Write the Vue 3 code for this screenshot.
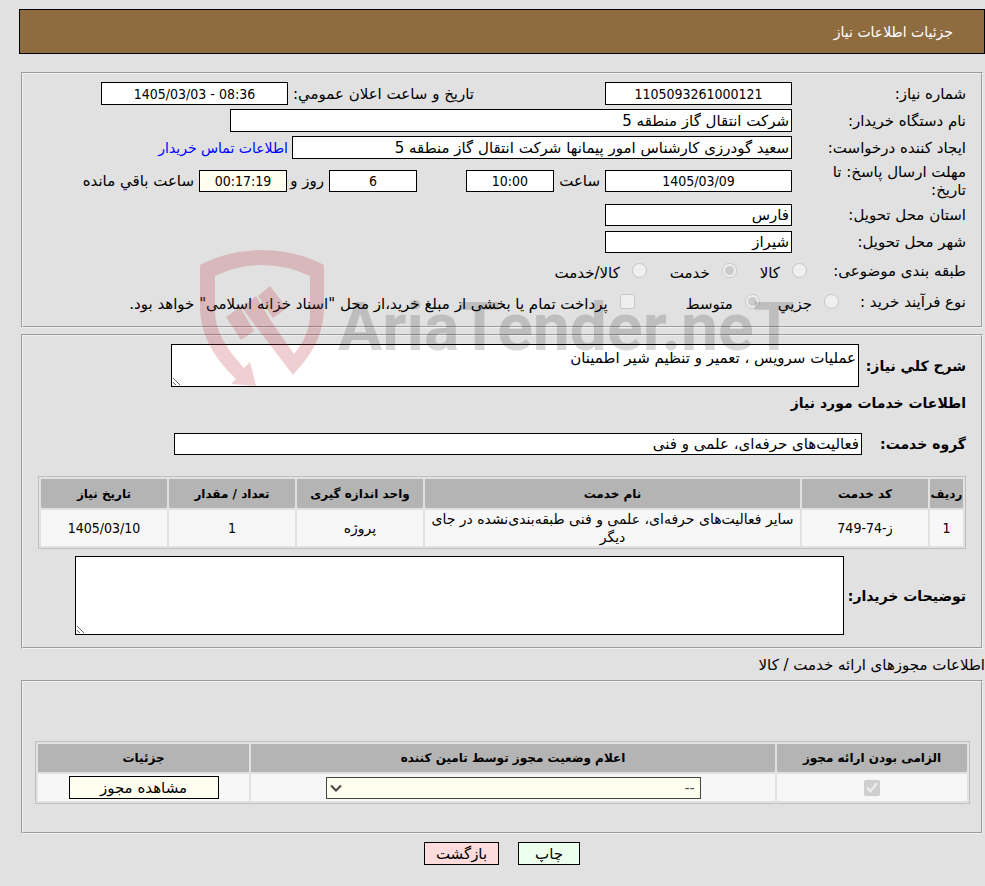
<script setup>
const serviceHeads = ['ردیف', 'کد خدمت', 'نام خدمت', 'واحد اندازه گیری', 'تعداد / مقدار', 'تاریخ نیاز']
const services = [
  ['1', 'ز-74-749', 'سایر فعالیت‌های حرفه‌ای، علمی و فنی طبقه‌بندی‌نشده در جای دیگر', 'پروژه', '1', '1405/03/10'],
]
const permitHeads = ['الزامی بودن ارائه مجوز', 'اعلام وضعیت مجوز توسط تامین کننده', 'جزئیات']
</script>

<template>
  <main class="page" dir="rtl">
    <header class="title-bar"><h1>جزئیات اطلاعات نیاز</h1></header>

    <section class="panel details">
      <div class="row">
        <label class="name" for="need-no">شماره نیاز:</label>
        <input id="need-no" class="box w-mid center" value="1105093261000121" readonly />
        <label class="announce" for="announce">تاریخ و ساعت اعلان عمومي:</label>
        <input id="announce" class="box w-mid center" dir="ltr" value="1405/03/03 - 08:36" readonly />
      </div>
      <div class="row">
        <label class="name" for="buyer">نام دستگاه خریدار:</label>
        <input id="buyer" class="box w-buyer" value="شرکت انتقال گاز منطقه 5" readonly />
      </div>
      <div class="row">
        <label class="name" for="creator">ایجاد کننده درخواست:</label>
        <input id="creator" class="box w-creator" value="سعید گودرزی کارشناس امور پیمانها شرکت انتقال گاز منطقه 5" readonly />
        <a class="contact" href="#contact">اطلاعات تماس خریدار</a>
      </div>
      <div class="row deadline">
        <label class="name" for="deadline">مهلت ارسال پاسخ: تا تاریخ:</label>
        <input id="deadline" class="box w-mid short center" value="1405/03/09" readonly />
        <label class="t-hour" for="hour">ساعت</label>
        <input id="hour" class="box w-small short center" value="10:00" readonly />
        <input id="days" class="box w-small short center days" value="6" readonly />
        <label class="t-days" for="days">روز و</label>
        <input id="left" class="box w-small short center ivory" value="00:17:19" readonly />
        <label class="t-left" for="left">ساعت باقي مانده</label>
      </div>
      <div class="row">
        <label class="name" for="province">استان محل تحویل:</label>
        <input id="province" class="box w-mid short" value="فارس" readonly />
      </div>
      <div class="row">
        <label class="name" for="city">شهر محل تحویل:</label>
        <input id="city" class="box w-mid short" value="شیراز" readonly />
      </div>
      <div class="row choices subject" role="radiogroup" aria-label="طبقه بندی موضوعی">
        <span class="name">طبقه بندی موضوعی:</span>
        <label class="choice c-goods"><input type="radio" name="subject" disabled /><span>کالا</span></label>
        <label class="choice c-service"><input type="radio" name="subject" checked disabled /><span>خدمت</span></label>
        <label class="choice c-both"><input type="radio" name="subject" disabled /><span>کالا/خدمت</span></label>
      </div>
      <div class="row choices process">
        <span class="name">نوع فرآیند خرید :</span>
        <label class="choice c-minor"><input type="radio" name="process" disabled /><span>جزیي</span></label>
        <label class="choice c-medium"><input type="radio" name="process" checked disabled /><span>متوسط</span></label>
        <label class="choice c-pay"><input type="checkbox" disabled /><span>پرداخت تمام یا بخشی از مبلغ خرید،از محل "اسناد خزانه اسلامی" خواهد بود.</span></label>
      </div>

      <svg class="watermark" viewBox="0 0 610 146" aria-hidden="true">
        <g fill="#b92b36" opacity=".22">
          <path d="M5 20Q34 5 67 5Q100 5 129 20V62Q129 82 120 100Q114 112 98 130L63 84 76 76 99 109Q115 90 115 68V31Q92 20 67 20Q42 20 20 31V67Q20 92 49 123L55 117 61 141 36 139 41 134Q5 100 5 63Z" />
          <path d="M31 72 45 62 59 86 46 95ZM47 63 61 51 76 76 63 84ZM63 51 75 41 92 63 78 73Z" />
        </g>
        <text x="143" y="105" class="brand">AriaTender.neT</text>
      </svg>
    </section>

    <section class="panel services">
      <div class="row summary">
        <label class="strong" for="summary">شرح کلي نیاز:</label>
        <textarea id="summary" class="box" readonly>عملیات سرویس ، تعمیر و تنظیم شیر اطمینان</textarea>
      </div>
      <h2 class="strong">اطلاعات خدمات مورد نیاز</h2>
      <div class="row group">
        <label class="strong" for="group">گروه خدمت:</label>
        <input id="group" class="box short" value="فعالیت‌های حرفه‌ای، علمی و فنی" readonly />
      </div>
      <table class="grid service-table">
        <colgroup><col class="k1" /><col class="k2" /><col /><col class="k2" /><col class="k2" /><col class="k2" /></colgroup>
        <thead><tr><th v-for="h in serviceHeads" :key="h">{{ h }}</th></tr></thead>
        <tbody><tr v-for="s in services" :key="s[0]"><td v-for="(c, i) in s" :key="i" :class="{ num: /\d/.test(c) }">{{ c }}</td></tr></tbody>
      </table>
      <div class="row notes">
        <label class="strong" for="notes">توضیحات خریدار:</label>
        <textarea id="notes" class="box" readonly></textarea>
      </div>
    </section>

    <p class="caption">اطلاعات مجوزهای ارائه خدمت / کالا</p>

    <section class="panel permits">
      <table class="grid permit-table">
        <colgroup><col class="p1" /><col /><col class="p3" /></colgroup>
        <thead><tr><th v-for="h in permitHeads" :key="h">{{ h }}</th></tr></thead>
        <tbody>
          <tr>
            <td><input type="checkbox" class="required" aria-label="الزامی بودن ارائه مجوز" checked disabled /></td>
            <td>
              <div class="select-wrap">
                <select aria-label="اعلام وضعیت مجوز" disabled><option>--</option></select>
                <svg viewBox="0 0 12 8" aria-hidden="true"><path d="M1 1.500 6 6.500 11 1.500" fill="none" stroke="#444" stroke-width="2" /></svg>
              </div>
            </td>
            <td><button type="button" class="view">مشاهده مجوز</button></td>
          </tr>
        </tbody>
      </table>
    </section>

    <footer class="actions">
      <button type="button" class="print">چاپ</button>
      <button type="button" class="back">بازگشت</button>
    </footer>
  </main>
</template>

<style>
body { background: #e1e1e1; }
</style>

<style scoped>
* { box-sizing: border-box; }
.page { padding: 9px 0 20px 19px; font: 15px/18px "DejaVu Sans", Tahoma, sans-serif; color: #000; }
input, textarea, select, button { font: inherit; color: inherit; margin: 0; }
h1, h2, p { margin: 0; font: inherit; }
.title-bar { height: 45px; padding: 0 31px; display: flex; align-items: center; background: #8f6c3f; border: 1px solid #000; color: #fff; font-size: 14px; }
.panel { position: relative; margin: 0 2px; padding: 0 15px; border: 2px groove #f0f0f0; }
.details { margin-top: 18px; padding-top: 6px; padding-bottom: 9px; }
.row { display: flex; align-items: center; min-height: 27px; }
.name { width: 174px; padding-left: 30px; flex: none; }
.box { height: 23px; padding: 0 2px; border: 1px solid #000; border-radius: 0; background: #fff; outline: 0; flex: none; }
.short { height: 22px; }
.center { text-align: center; font-family: "DejaVu Sans Condensed", "DejaVu Sans", sans-serif; font-size: 14px; }
.ivory { background: #fffff0; }
.w-mid { width: 187px; }
.w-small { width: 88px; }
.w-buyer { width: 562px; }
.w-creator { width: 500px; }
.announce { margin-right: 131px; width: 186px; white-space: nowrap; }
.contact { margin-right: 4px; color: #00f; font-size: 14px; text-decoration: none; white-space: nowrap; }
.deadline { min-height: 40px; }
.t-hour { width: 51px; padding-right: 5px; white-space: nowrap; }
.days { margin-right: 49px; }
.t-days { width: 42px; padding-right: 5px; white-space: nowrap; }
.t-left { padding-right: 5px; white-space: nowrap; }
.choice { display: flex; align-items: center; gap: 12px; white-space: nowrap; flex: none; }
.choice span { padding-top: 4px; }
.choice input { width: 15px; height: 15px; flex: none; }
.choices { min-height: 31px; }
.choices .name { width: 159px; padding-left: 0; }
.c-service, .c-both { margin-right: 23px; }
.process .name { width: 127px; }
.c-medium { margin-right: 18px; }
.c-pay { margin-right: 51px; }
.watermark { position: absolute; left: 172px; top: 171px; width: 610px; height: 146px; z-index: 2; pointer-events: none; direction: ltr; }
.brand { font: bold 66px Roboto, "Liberation Sans", sans-serif; fill: #000; opacity: .15; }
.strong { font-weight: bold; font-size: 14px; flex: none; }
.services { margin-top: 6px; padding-top: 8px; padding-bottom: 12px; }
.summary { gap: 5px; }
.summary label { width: 102px; white-space: nowrap; }
.summary .box { width: 688px; height: 43px; padding: 4px 2px; display: block; }
h2 { margin-top: 7px; }
.group { margin-top: 18px; gap: 18px; }
.group label { width: 86px; }
.group .box { width: 688px; }
.grid { border: 1px solid #bfbfbf; border-collapse: separate; border-spacing: 2px; table-layout: fixed; text-align: center; }
.grid th { height: 29px; padding: 0; background: #b4b4b4; font-size: 12px; }
.grid td { padding: 0 2px; background: #f7f7f7; font-size: 14px; }
.grid .num { font-family: "DejaVu Sans Condensed", "DejaVu Sans", sans-serif; }
.service-table { width: 928px; margin-top: 19px; }
.service-table td { height: 36px; }
.k1 { width: 33px; }
.k2 { width: 126px; }
.notes { margin-top: 7px; gap: 5px; }
.notes label { width: 117px; white-space: nowrap; }
.notes .box { width: 769px; height: 79px; display: block; }
.caption { margin: 7px 0 6px; }
.permits { padding: 59px 11px 28px 12px; }
.permit-table { width: 100%; }
.permit-table th { height: 28px; }
.permit-table td { height: 27px; }
.p1 { width: 190px; }
.p3 { width: 211px; }
.required { display: block; margin: 0 auto; width: 16px; height: 16px; }
.select-wrap { position: relative; width: 375px; margin: 0 auto; }
.select-wrap select { appearance: none; display: block; width: 100%; height: 22px; padding: 0 5px; border: 1px solid #444; border-radius: 0; background: #fffff0; opacity: 1; color: #444; }
.select-wrap svg { position: absolute; left: 4px; top: 7px; width: 12px; height: 8px; }
button { height: 23px; padding: 0; border: 1px solid #000; }
.view { display: block; width: 150px; margin: 0 auto; background: #fffff0; font-size: 15px; }
.actions { display: flex; justify-content: center; gap: 19px; margin-top: 8px; }
.print { width: 62px; background: #edffed; }
.back { width: 75px; background: #ffdcdc; }
</style>
